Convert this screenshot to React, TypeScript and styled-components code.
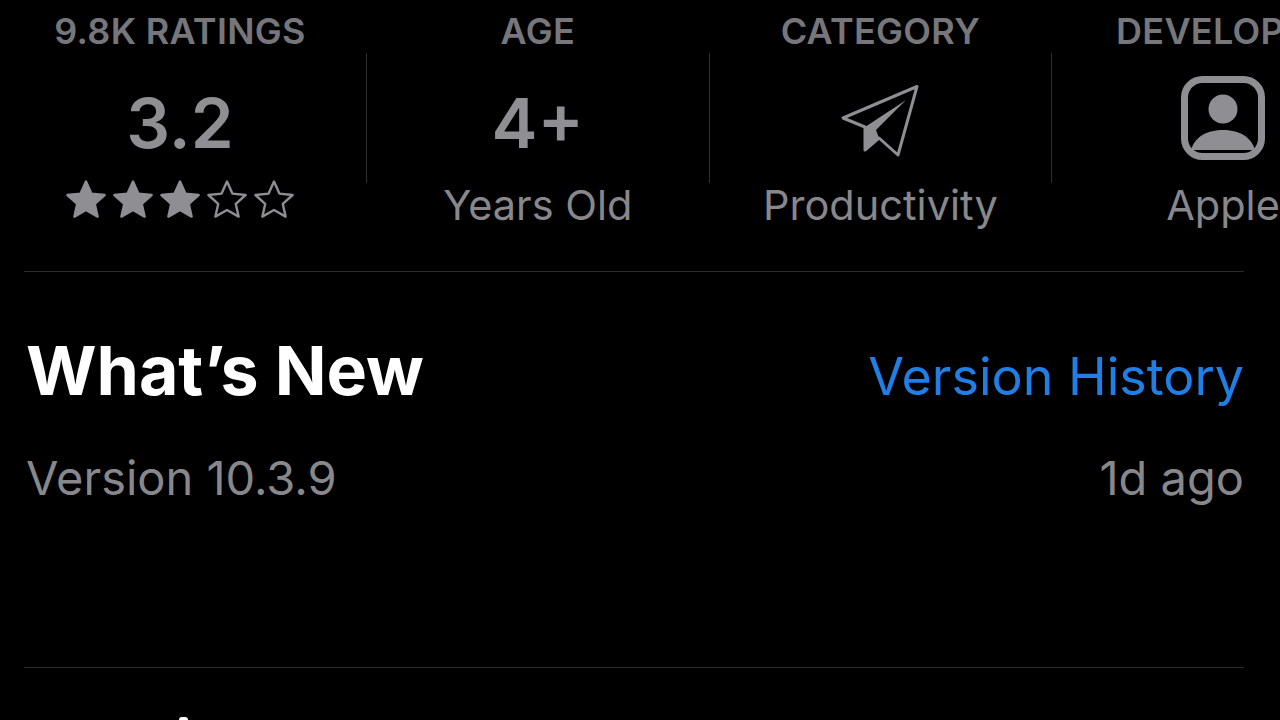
import React from "react";
import styled, { createGlobalStyle } from "styled-components";

const GlobalStyle = createGlobalStyle`
  html, body {
    margin: 0;
    padding: 0;
    background: #000;
    overflow: hidden;
  }
  body {
    font-family: Inter, "Liberation Sans", sans-serif;
  }
`;

const Page = styled.div`
  width: 1280px;
  height: 720px;
  overflow: hidden;
  background: #000;
`;

const StatsRow = styled.div`
  display: flex;
  height: 271px;
  margin-left: -6px;
  width: 1450px;
`;

const StatColumn = styled.div`
  width: 341.6px;
  flex: none;
  display: flex;
  flex-direction: column;
  align-items: center;
  padding-top: 11px;
  white-space: nowrap;

  &:first-child {
    width: 372px;
  }
`;

const ColumnDivider = styled.div`
  flex: none;
  width: 1px;
  height: 130px;
  margin-top: 53px;
  background: #2f2f31;
`;

const StatLabel = styled.div`
  font-size: 36px;
  line-height: 40px;
  font-weight: 600;
  letter-spacing: 0.3px;
  color: #77777b;
`;

const StatValue = styled.div`
  height: 88px;
  display: flex;
  align-items: center;
  justify-content: center;
  margin-top: 26px;
  color: #8e8e93;
`;

const StatNumber = styled.span`
  padding-top: 3px;
  font-size: 69px;
  font-weight: 600;
`;

const StatCaption = styled.div`
  margin-top: 16px;
  font-size: 41.5px;
  line-height: 48px;
  color: #88888c;
`;

const StarRow = styled.div`
  display: flex;
  gap: 7px;
  margin-top: 15px;
`;

const Rule = styled.div`
  height: 1px;
  margin: 0 36px 0 24px;
  background: #2c2c2e;
`;

const NewSection = styled.section`
  height: 395px;
  padding: 56px 36px 0 26px;
  box-sizing: border-box;
`;

const HeaderRow = styled.div`
  display: flex;
  justify-content: space-between;
  align-items: baseline;
`;

const Heading = styled.h2`
  margin: 0;
  font-size: 68px;
  line-height: 84px;
  font-weight: 700;
  color: #fff;
`;

const HistoryLink = styled.a`
  font-size: 52px;
  color: #1f7fe6;
  text-decoration: none;
`;

const MetaRow = styled.div`
  display: flex;
  justify-content: space-between;
  margin-top: 38px;
  font-size: 47px;
  line-height: 56px;
  color: #88888c;
`;

const NextHeadingPeek = styled.div`
  width: 9px;
  height: 3px;
  margin: 49px 0 0 179px;
  border-radius: 6px 6px 0 0;
  background: #fff;
`;

const ContactSvg = styled.svg`
  margin-top: -6px;
`;

const Star: React.FC<{ filled: boolean }> = ({ filled }) => (
  <svg width="40" height="38" viewBox="0 0 40 38">
    <path
      d="M20 1.5 L25.4 13.6 L38.6 15 L28.8 23.9 L31.6 36.6 L20 30 L8.4 36.6 L11.2 23.9 L1.4 15 L14.6 13.6 Z"
      fill={filled ? "#8e8e93" : "none"}
      stroke="#8e8e93"
      strokeWidth="2.4"
      strokeLinejoin="round"
    />
  </svg>
);

const PlaneIcon = () => (
  <svg width="80" height="76" viewBox="0 0 80 76">
    <path
      d="M77 3.5 L3 35 L25 44 L25 67 L39 55 L58 72 Z"
      fill="none"
      stroke="#8e8e93"
      strokeWidth="3"
      strokeLinejoin="round"
    />
    <path d="M25 44 L66 17 L36 47 L39 55 L25 67 Z" fill="#8e8e93" />
  </svg>
);

const ContactIcon = () => (
  <ContactSvg width="84" height="84" viewBox="0 0 84 84">
    <rect x="3.5" y="3.5" width="77" height="77" rx="18" fill="none" stroke="#8e8e93" strokeWidth="7" />
    <circle cx="42" cy="33" r="14.5" fill="#8e8e93" />
    <path d="M10 74 C14 60 27 54 42 54 C57 54 70 60 74 74 Z" fill="#8e8e93" />
  </ContactSvg>
);

export default function App() {
  return (
    <Page>
      <GlobalStyle />
      <StatsRow>
        <StatColumn>
          <StatLabel>9.8K RATINGS</StatLabel>
          <StatValue>
            <StatNumber>3.2</StatNumber>
          </StatValue>
          <StarRow>
            {[true, true, true, false, false].map((filled, i) => (
              <Star key={i} filled={filled} />
            ))}
          </StarRow>
        </StatColumn>
        <ColumnDivider />
        <StatColumn>
          <StatLabel>AGE</StatLabel>
          <StatValue>
            <StatNumber>4+</StatNumber>
          </StatValue>
          <StatCaption>Years Old</StatCaption>
        </StatColumn>
        <ColumnDivider />
        <StatColumn>
          <StatLabel>CATEGORY</StatLabel>
          <StatValue>
            <PlaneIcon />
          </StatValue>
          <StatCaption>Productivity</StatCaption>
        </StatColumn>
        <ColumnDivider />
        <StatColumn>
          <StatLabel>DEVELOPER</StatLabel>
          <StatValue>
            <ContactIcon />
          </StatValue>
          <StatCaption>Apple</StatCaption>
        </StatColumn>
      </StatsRow>
      <Rule />
      <NewSection>
        <HeaderRow>
          <Heading>What’s New</Heading>
          <HistoryLink href="#">Version History</HistoryLink>
        </HeaderRow>
        <MetaRow>
          <span>Version 10.3.9</span>
          <span>1d ago</span>
        </MetaRow>
      </NewSection>
      <Rule />
      <NextHeadingPeek />
    </Page>
  );
}
